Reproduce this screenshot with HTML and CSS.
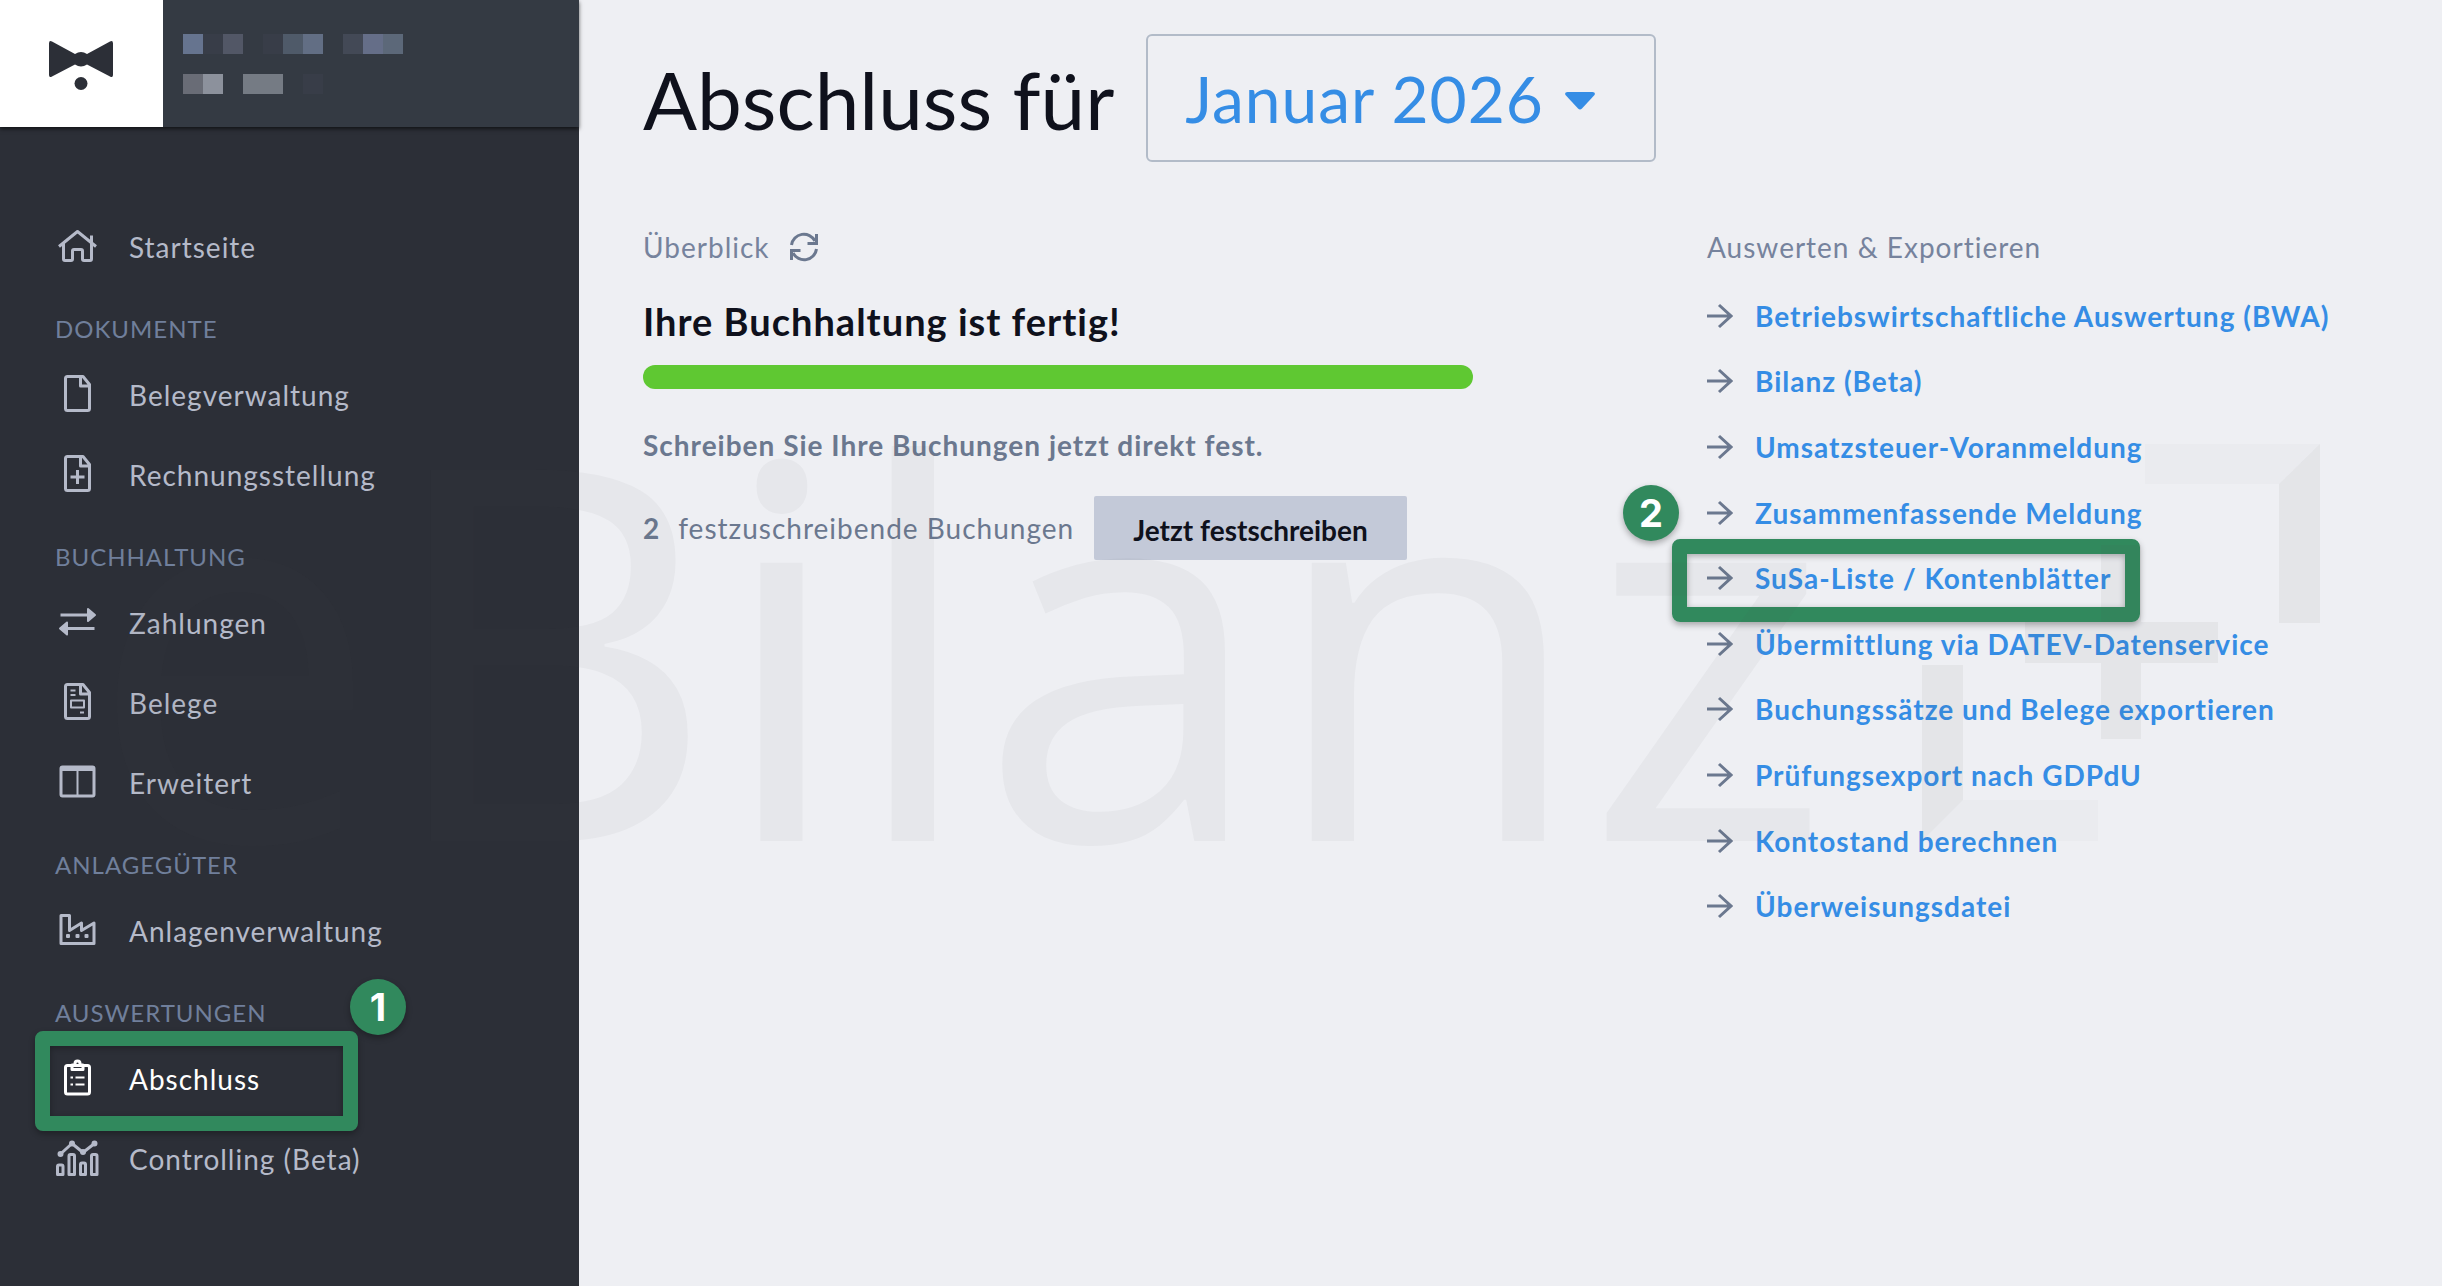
FILE: index.html
```html
<!DOCTYPE html>
<html lang="de">
<head>
  <meta charset="UTF-8">
  <meta name="viewport" content="width=device-width, initial-scale=1.0">
  <title>Abschluss</title>
  <link rel="stylesheet" href="styles.css">
</head>
<body>
  <div class="app">
    <aside class="sidebar">
      <div class="brand">
        <a class="logo" href="#" aria-label="Startseite">
          <svg width="66" height="60" viewBox="1 -5 66 60">
            <path d="M1 4.500Q1 1 4 2.500L27 15Q33 11 39 15L62 2.500Q65 1 65 4.500V36Q65 39 62 37.500L39 25.500Q33 29.500 27 25.500L4 37.500Q1 39 1 36Z"/>
            <circle cx="33" cy="44.500" r="6.500"/>
          </svg>
        </a>
        <div class="account">
          <div class="blocks">
            <i class="b1"></i><i class="b2"></i><i class="b3"></i><i></i><i class="b2"></i><i class="b4"></i><i class="b5"></i><i></i><i class="b6"></i><i class="b7"></i><i class="b8"></i>
          </div>
          <div class="blocks">
            <i class="b9"></i><i class="b10"></i><i></i><i class="b11"></i><i class="b11"></i><i></i><i class="b2"></i>
          </div>
        </div>
      </div>

      <nav class="nav">
        <a class="nav-item" href="#">
          <svg class="icon" viewBox="0 0 44 44"><path d="M4 21.500 22.500 6.500 41 21.500M8.500 18.500V34q0 1.500 1.500 1.500h6q1.500 0 1.500-1.500v-8q0-1.500 1.500-1.500h7q1.500 0 1.500 1.500v8q0 1.500 1.500 1.500h6q1.500 0 1.500-1.500V18.500M36.500 10.500v7"/></svg>
          Startseite
        </a>
        <h2 class="nav-title">Dokumente</h2>
        <a class="nav-item" href="#">
          <svg class="icon" viewBox="0 0 44 44"><path d="M12.500 3.500H28L34.500 11.500V35.500q0 2-2 2h-20q-2 0-2-2v-30q0-2 2-2zM25.500 4v9h8.500"/></svg>
          Belegverwaltung
        </a>
        <a class="nav-item" href="#">
          <svg class="icon" viewBox="0 0 44 44"><path d="M12.500 3.500H28L34.500 11.500V35.500q0 2-2 2h-20q-2 0-2-2v-30q0-2 2-2zM25.500 4v9h8.500M22.500 17v14M15.500 24h14"/></svg>
          Rechnungsstellung
        </a>
        <h2 class="nav-title">Buchhaltung</h2>
        <a class="nav-item" href="#">
          <svg class="icon" viewBox="0 0 44 44"><path d="M5.500 14H34M10 27.500H39.500"/><path class="solid" d="M33 8l7 6-7 6zM12 21.500l-7 6 7 6z"/></svg>
          Zahlungen
        </a>
        <a class="nav-item" href="#">
          <svg class="icon" viewBox="0 0 44 44"><path d="M12.500 3.500H28L34.500 11.500V35.500q0 2-2 2h-20q-2 0-2-2v-30q0-2 2-2zM25.500 4v9h8.500"/><path class="thin" d="M15.500 9.500h5M15.500 14h5M16 19.500h13v7H16zM25 31.500h4"/></svg>
          Belege
        </a>
        <a class="nav-item" href="#">
          <svg class="icon" viewBox="0 0 44 44"><rect x="6" y="6" width="33" height="29" rx="1.500"/><path d="M6 8.500h33"/><path class="thin" d="M22.500 9v26"/></svg>
          Erweitert
        </a>
        <h2 class="nav-title">Anlagegüter</h2>
        <a class="nav-item" href="#">
          <svg class="icon" viewBox="0 0 44 44"><path d="M6 6.500h8.500V21.500L26.500 14V21.500L39 14V34.500H6z"/><path class="solid" d="M12 26h2v2h-2zM21.500 26h2v2h-2zM30.500 26h2v2h-2z"/></svg>
          Anlagenverwaltung
        </a>
        <h2 class="nav-title">Auswertungen</h2>
        <div class="marked">
          <a class="nav-item active" href="#" aria-current="page">
            <svg class="icon" viewBox="0 0 44 44"><rect x="10.500" y="8.500" width="24" height="28.500" rx="2"/><path d="M22.500 4a2.500 2.500 0 0 1 2.500 2.500V8h3v4.500H17V8h3V6.500A2.500 2.500 0 0 1 22.500 4z"/><path class="thin" d="M15.500 20.500h2.500M20.500 20.500h9M15.500 27.500h2.500M20.500 27.500h9"/></svg>
            Abschluss
          </a>
          <span class="frame frame-nav"></span>
          <span class="step step-nav">1</span>
        </div>
        <a class="nav-item" href="#">
          <svg class="icon" viewBox="0 0 44 44"><path d="M5.500 17 17 6.500 28 15.500 39.500 6.500M2.500 29.500q0-1.500 1.500-1.500h2.500q1.500 0 1.500 1.500v8H2.500zM14 19q0-1.500 1.500-1.500H18q1.500 0 1.500 1.500v18.500H14zM25.500 27.500q0-1.500 1.500-1.500h2q1.500 0 1.500 1.500v10h-5zM36.500 19q0-1.500 1.500-1.500h2.500q1.500 0 1.500 1.500v18.500h-5.500z"/><g class="solid"><circle cx="5.500" cy="17" r="2"/><circle cx="17" cy="6.500" r="2"/><circle cx="28" cy="15" r="2"/><circle cx="39.500" cy="6.500" r="2"/></g></svg>
          Controlling (Beta)
        </a>
      </nav>
    </aside>

    <main class="content">
      <header class="page-head">
        <h1><label for="period">Abschluss für</label></h1>
        <div class="period">
          <select id="period">
            <option>Januar 2026</option>
          </select>
          <svg class="caret" width="30" height="18" viewBox="0 0 30 18"><path d="M2.500 0h25q3.500 0.500 2 3L17 16.500q-2 2-4 0L0.500 3Q-1 0.500 2.500 0z"/></svg>
        </div>
      </header>

      <div class="columns">
        <section class="overview">
          <div class="label">
            <h2 class="section-title">Überblick</h2>
            <button class="refresh" type="button" aria-label="Aktualisieren">
              <svg width="32" height="32" viewBox="0 0 32 32"><path d="M3.500 14A12.500 12.500 0 0 1 27 10M28.500 3v9.500H19.500M28.500 18A12.500 12.500 0 0 1 5 22M3.500 29v-9.500H12.500"/></svg>
            </button>
          </div>
          <h3 class="status">Ihre Buchhaltung ist fertig!</h3>
          <div class="progress"></div>
          <p class="hint">Schreiben Sie Ihre Buchungen jetzt direkt fest.</p>
          <div class="pending">
            <span><b>2</b>festzuschreibende Buchungen</span>
            <button class="commit" type="button">Jetzt festschreiben</button>
          </div>
        </section>

        <section class="reports">
          <h2 class="section-title">Auswerten &amp; Exportieren</h2>
          <ul class="links">
            <li><svg class="arrow" viewBox="0 0 26 26"><path d="M0 13h24M12 2l12 11-12 11"/></svg><a href="#">Betriebswirtschaftliche Auswertung (BWA)</a></li>
            <li><svg class="arrow" viewBox="0 0 26 26"><path d="M0 13h24M12 2l12 11-12 11"/></svg><a href="#">Bilanz (Beta)</a></li>
            <li><svg class="arrow" viewBox="0 0 26 26"><path d="M0 13h24M12 2l12 11-12 11"/></svg><a href="#">Umsatzsteuer-Voranmeldung</a></li>
            <li><svg class="arrow" viewBox="0 0 26 26"><path d="M0 13h24M12 2l12 11-12 11"/></svg><a href="#">Zusammenfassende Meldung</a></li>
            <li class="marked">
              <svg class="arrow" viewBox="0 0 26 26"><path d="M0 13h24M12 2l12 11-12 11"/></svg><a href="#">SuSa-Liste / Kontenblätter</a>
              <span class="frame frame-link"></span>
              <span class="step step-link">2</span>
            </li>
            <li><svg class="arrow" viewBox="0 0 26 26"><path d="M0 13h24M12 2l12 11-12 11"/></svg><a href="#">Übermittlung via DATEV-Datenservice</a></li>
            <li><svg class="arrow" viewBox="0 0 26 26"><path d="M0 13h24M12 2l12 11-12 11"/></svg><a href="#">Buchungssätze und Belege exportieren</a></li>
            <li><svg class="arrow" viewBox="0 0 26 26"><path d="M0 13h24M12 2l12 11-12 11"/></svg><a href="#">Prüfungsexport nach GDPdU</a></li>
            <li><svg class="arrow" viewBox="0 0 26 26"><path d="M0 13h24M12 2l12 11-12 11"/></svg><a href="#">Kontostand berechnen</a></li>
            <li><svg class="arrow" viewBox="0 0 26 26"><path d="M0 13h24M12 2l12 11-12 11"/></svg><a href="#">Überweisungsdatei</a></li>
          </ul>
        </section>
      </div>
    </main>

    <!-- watermark over the whole page -->
    <svg class="watermark" viewBox="0 0 2442 1286" preserveAspectRatio="xMinYMin meet" aria-hidden="true">
      <text x="88" y="841">eBilanz</text>
      <path class="wm-dark" d="M2320 444V623H2279V484zM1922 665H1963V800L1922 841zM2101 545H2141V622H2218V663H2141V739H2101V663H2025V622H2101z"/>
      <path class="wm-light" d="M2145 444H2320L2279 484H2145zM1963 800H2098V841H1922z"/>
    </svg>
  </div>
</body>
</html>
```
FILE: styles.css
```css
* {
  box-sizing: border-box;
}
body {
  margin: 0;
  font-family: Lato, "Liberation Sans", sans-serif;
  font-size: 28px;
  line-height: 40px;
  letter-spacing: 1px;
  color: #6b788f;
  background-color: #eeeff3;
}
h1, h2, h3, p, ul {
  margin: 0;
  padding: 0;
  font-weight: 400;
}
a {
  text-decoration: none;
}
.app {
  position: relative;
  display: flex;
  min-height: 100vh;
}

/* sidebar */
.sidebar {
  flex: 0 0 579px;
  background-color: #2c2f37;
}
.brand {
  display: flex;
  height: 127px;
  background-color: #343a43;
  box-shadow: 0 2px 4px rgba(0, 0, 0, 0.6);
}
.logo {
  display: flex;
  align-items: center;
  justify-content: center;
  width: 163px;
  background-color: #fff;
  fill: #2c2f37;
}
.account {
  display: flex;
  flex-direction: column;
  justify-content: center;
  gap: 20px;
  padding-left: 20px;
}
.blocks {
  display: flex;
}
.blocks i {
  width: 20px;
  height: 20px;
}
.b1 { background-color: #66748f; }
.b2 { background-color: #383d48; }
.b3 { background-color: #525766; }
.b4 { background-color: #4f5a69; }
.b5 { background-color: #626e84; }
.b6 { background-color: #434956; }
.b7 { background-color: #656e88; }
.b8 { background-color: #5c6879; }
.b9 { background-color: #696c76; }
.b10 { background-color: #8c919c; }
.b11 { background-color: #757b84; }

.nav {
  padding: 80px 0 80px 55px;
}
.nav-item {
  display: flex;
  align-items: center;
  gap: 30px;
  height: 80px;
  color: #b5bac9;
}
.nav-item.active {
  color: #fff;
}
.nav-title {
  padding: 22px 0 6px;
  font-size: 24px;
  text-transform: uppercase;
  color: #707f9b;
}
.icon {
  width: 44px;
  height: 44px;
  fill: none;
  stroke: currentColor;
  stroke-width: 3;
  stroke-linejoin: round;
}
.icon .thin {
  stroke-width: 2;
}
.icon .solid {
  fill: currentColor;
  stroke-width: 2;
}

/* content */
.content {
  flex: 1;
  padding: 34px 64px;
}
.page-head {
  display: flex;
  align-items: center;
  gap: 32px;
  margin-bottom: 65px;
}
.page-head h1 {
  padding-top: 2px;
  font-size: 80px;
  line-height: 96px;
  letter-spacing: 0;
  color: #0f111c;
}
.period {
  position: relative;
}
.period select {
  display: block;
  appearance: none;
  width: 510px;
  height: 128px;
  padding: 2px 37px 0;
  border: 2px solid #b2bbc8;
  border-radius: 6px;
  background: none;
  font: inherit;
  font-size: 64px;
  line-height: 96px;
  letter-spacing: 1px;
  color: #358de5;
}
.caret {
  position: absolute;
  top: 58px;
  right: 61px;
  fill: #358de5;
  pointer-events: none;
}
.columns {
  display: grid;
  grid-template-columns: 1fr 671px;
}
.overview {
  max-width: 830px;
}
.label {
  display: flex;
  align-items: center;
  gap: 18px;
}
.section-title {
  font-size: 28px;
  color: #76839d;
}
.refresh {
  display: flex;
  padding: 0;
  border: 0;
  background: none;
}
.refresh svg {
  fill: none;
  stroke: #6b788f;
  stroke-width: 3;
}
.status {
  margin: 30px 0 20px;
  font-size: 38px;
  line-height: 48px;
  font-weight: 700;
  color: #0f111c;
}
.progress {
  height: 24px;
  border-radius: 12px;
  background-color: #5fc832;
}
.hint {
  margin: 36px 0 31px;
  font-weight: 700;
}
.pending {
  display: flex;
  align-items: center;
  gap: 20px;
}
.pending b {
  margin-right: 18px;
}
.commit {
  height: 64px;
  padding: 4px 39px 0;
  border: 0;
  border-radius: 2px;
  background-color: #c3c9d8;
  font: inherit;
  font-weight: 700;
  color: #0f111c;
}
.links {
  display: grid;
  grid-auto-rows: 1fr;
  height: 656px;
  margin-top: 16px;
  list-style: none;
}
.links li {
  display: flex;
  align-items: center;
  gap: 22px;
}
.links a {
  font-weight: 700;
  color: #358de5;
}
.arrow {
  width: 26px;
  height: 26px;
  fill: none;
  stroke: #6b788f;
  stroke-width: 3;
}

/* numbered step markers */
.marked {
  position: relative;
}
.frame {
  position: absolute;
  border: 15px solid #31895d;
  border-radius: 8px;
  box-shadow: 0 3px 6px rgba(0, 0, 0, 0.3), inset 0 2px 6px rgba(0, 0, 0, 0.3);
  pointer-events: none;
}
.frame-nav {
  top: -8px;
  left: -20px;
  width: 323px;
  height: 100px;
}
.frame-link {
  top: -6px;
  left: -35px;
  width: 468px;
  height: 83px;
}
.step {
  position: absolute;
  width: 56px;
  height: 56px;
  border-radius: 50%;
  background-color: #31895d;
  box-shadow: 0 3px 6px rgba(0, 0, 0, 0.3);
  font: 700 38px/56px Inter, sans-serif;
  letter-spacing: 0;
  text-align: center;
  color: #fff;
}
.step-nav {
  top: -60px;
  left: 295px;
}
.step-link {
  top: -60px;
  left: -84px;
}

.watermark {
  position: absolute;
  top: 0;
  left: 0;
  width: 100%;
  fill: rgba(90, 90, 90, 0.046);
  font-family: "Open Sans", "Noto Sans", sans-serif;
  font-size: 520px;
  font-weight: 500;
  letter-spacing: 0;
  pointer-events: none;
}
.wm-dark {
  fill: rgba(90, 90, 90, 0.066);
}
.wm-light {
  fill: rgba(90, 90, 90, 0.024);
}
```
